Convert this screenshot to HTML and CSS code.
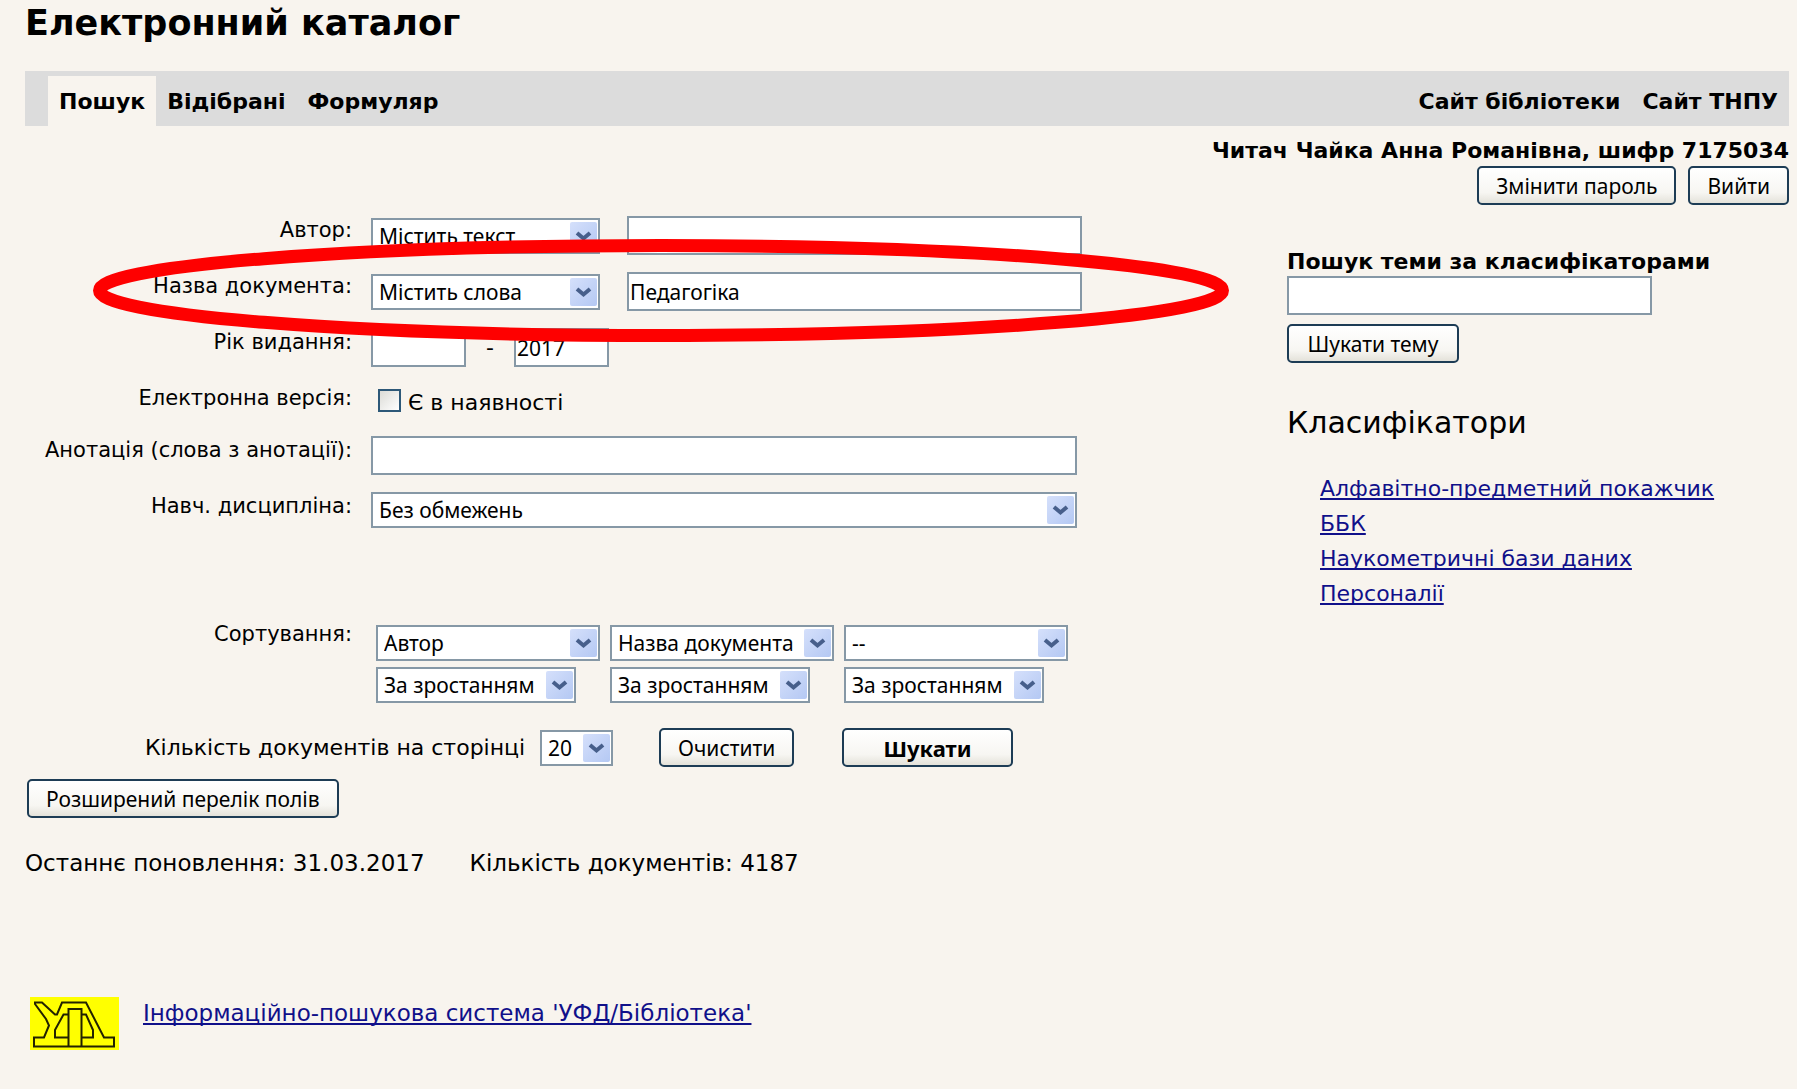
FILE: index.html
```html
<!DOCTYPE html>
<html lang="uk">
<head>
<meta charset="utf-8">
<title>Електронний каталог</title>
<link rel="stylesheet" href="styles.css">
</head>
<body>
<svg class="defs" aria-hidden="true">
  <defs>
    <linearGradient id="arrow-bg" x1="0" y1="0" x2="1" y2="1">
      <stop offset="0" stop-color="#d5e0fb"/>
      <stop offset="1" stop-color="#b4c8f3"/>
    </linearGradient>
    <symbol id="arrow" viewBox="0 0 27 28">
      <rect width="27" height="28" rx="2" fill="url(#arrow-bg)"/>
      <path d="M7 11l6.500 5.500L20 11" fill="none" stroke="#475f8b" stroke-width="4"/>
    </symbol>
  </defs>
</svg>

<header>
  <h1 class="title">Електронний каталог</h1>
  <nav class="bar">
    <a class="tab tab-active" href="#">Пошук</a>
    <a class="tab" href="#">Відібрані</a>
    <a class="tab" href="#">Формуляр</a>
    <a class="tab tab-push" href="#">Сайт бібліотеки</a>
    <a class="tab" href="#">Сайт ТНПУ</a>
  </nav>
  <div class="reader">
    <p class="reader-name">Читач Чайка Анна Романівна, шифр 7175034</p>
    <div class="reader-actions">
      <button class="btn" type="button">Змінити пароль</button>
      <button class="btn" type="button">Вийти</button>
    </div>
  </div>
</header>

<main class="main">
  <form class="search">
    <div class="row">
      <label class="label" for="author">Автор:</label>
      <div class="controls controls-wide">
        <span class="select w-mode"><select aria-label="Умова для автора"><option>Містить текст</option></select><svg class="arrow"><use href="#arrow"/></svg></span>
        <input class="input w-text" id="author" type="text">
      </div>
    </div>
    <div class="row">
      <label class="label" for="doc">Назва документа:</label>
      <div class="controls controls-wide">
        <span class="select w-mode"><select aria-label="Умова для назви"><option>Містить слова</option></select><svg class="arrow"><use href="#arrow"/></svg></span>
        <input class="input w-text" id="doc" type="text" value="Педагогіка">
      </div>
    </div>
    <div class="row">
      <label class="label" for="year-from">Рік видання:</label>
      <div class="controls">
        <input class="input w-year" id="year-from" type="text">
        <span class="dash">-</span>
        <input class="input w-year" aria-label="Рік видання до" type="text" value="2017">
      </div>
    </div>
    <div class="row row-check">
      <span class="label">Електронна версія:</span>
      <div class="controls check">
        <input class="checkbox" id="available" type="checkbox">
        <label class="check-label" for="available">Є в наявності</label>
      </div>
    </div>
    <div class="row">
      <label class="label" for="note">Анотація (слова з анотації):</label>
      <div class="controls"><input class="input w-full" id="note" type="text"></div>
    </div>
    <div class="row">
      <label class="label" for="subject">Навч. дисципліна:</label>
      <div class="controls">
        <span class="select w-full"><select id="subject"><option>Без обмежень</option></select><svg class="arrow"><use href="#arrow"/></svg></span>
      </div>
    </div>
    <div class="row row-sort">
      <label class="label" for="sort">Сортування:</label>
      <div class="sort">
        <span class="select w-key"><select id="sort"><option>Автор</option></select><svg class="arrow"><use href="#arrow"/></svg></span>
        <span class="select w-key"><select aria-label="Друге поле"><option>Назва документа</option></select><svg class="arrow"><use href="#arrow"/></svg></span>
        <span class="select w-key"><select aria-label="Третє поле"><option>--</option></select><svg class="arrow"><use href="#arrow"/></svg></span>
        <span class="select w-order"><select aria-label="Порядок 1"><option>За зростанням</option></select><svg class="arrow"><use href="#arrow"/></svg></span>
        <span class="select w-order"><select aria-label="Порядок 2"><option>За зростанням</option></select><svg class="arrow"><use href="#arrow"/></svg></span>
        <span class="select w-order"><select aria-label="Порядок 3"><option>За зростанням</option></select><svg class="arrow"><use href="#arrow"/></svg></span>
      </div>
    </div>
    <div class="submit">
      <label class="per-page" for="per-page">Кількість документів на сторінці</label>
      <span class="select w-count"><select id="per-page"><option>20</option></select><svg class="arrow"><use href="#arrow"/></svg></span>
      <button class="btn btn-clear" type="reset">Очистити</button>
      <button class="btn btn-search" type="submit">Шукати</button>
    </div>
    <button class="btn btn-more" type="button">Розширений перелік полів</button>
    <svg class="highlight" viewBox="0 0 1136 103" aria-hidden="true">
      <ellipse cx="568" cy="51.500" rx="561.500" ry="45" fill="none" stroke="#fe0000" stroke-width="13"/>
    </svg>
  </form>

  <aside class="side">
    <label class="side-label" for="topic">Пошук теми за класифікаторами</label>
    <input class="input w-topic" id="topic" type="text">
    <button class="btn btn-topic" type="button">Шукати тему</button>
    <h2 class="side-title">Класифікатори</h2>
    <ul class="links">
      <li><a href="#">Алфавітно-предметний покажчик</a></li>
      <li><a href="#">ББК</a></li>
      <li><a href="#">Наукометричні бази даних</a></li>
      <li><a href="#">Персоналії</a></li>
    </ul>
  </aside>
</main>

<p class="stats"><span>Останнє поновлення: 31.03.2017</span><span>Кількість документів: 4187</span></p>

<footer class="footer">
  <svg class="logo" viewBox="0 0 89 53" role="img" aria-label="УФД">
    <rect width="89" height="53" fill="#ff0"/>
    <path d="M5 5.500h7L25 17.500h2L32 5.500h24L74 40.500h10v9H4v-9h10L19 28.500 16 22 5 7zM38.500 49V12h13v37M38.500 17.500h-5L25 33v7.500h13.500M51.500 17.500H56L63 33v7.500H51.500" fill="none" stroke="#222200" stroke-width="2"/>
  </svg>
  <a href="#">Інформаційно-пошукова система 'УФД/Бібліотека'</a>
</footer>
</body>
</html>
```
FILE: styles.css
```css
* {
  box-sizing: border-box;
}

body {
  margin: 0;
  padding: 3px 8px 24px 25px;
  background: #f8f4ee;
  color: #000;
  font: 22px/28px "DejaVu Sans", Verdana, sans-serif;
}

p,
h1,
h2,
ul {
  margin: 0;
  padding: 0;
}

a {
  color: #10108a;
  text-decoration-thickness: 2px;
  text-underline-offset: 2px;
  text-decoration-skip-ink: none;
}

.defs {
  position: absolute;
  width: 0;
  height: 0;
}

/* Header */

.title {
  margin-bottom: 28px;
  font-size: 35px;
  line-height: 40px;
}

.bar {
  display: flex;
  padding: 5px 0 0 23px;
  background: #dcdcdc;
}

.tab {
  padding: 12px 11px 10px;
  color: #000;
  font-weight: bold;
  text-decoration: none;
}

.tab-active {
  background: #f8f4ee;
}

.tab-push {
  margin-left: auto;
}

.reader {
  padding-top: 10px;
  text-align: right;
}

.reader-name {
  font-weight: bold;
  line-height: 30px;
}

.reader-actions {
  display: flex;
  justify-content: flex-end;
  gap: 12px;
}

/* Controls */

.btn,
.input,
.select select {
  color: #000;
  font: 21px "Noto Sans", Tahoma, sans-serif;
}

.btn {
  height: 39px;
  padding: 0 17px;
  border: 2px solid #1d3c55;
  border-radius: 5px;
  background: linear-gradient(#fff, #f7f6f2 70%, #e4e2da);
  white-space: nowrap;
}

.input {
  height: 39px;
  padding: 0 1px;
  border: 2px solid #8698a6;
  background: #fff;
}

.select {
  display: grid;
  position: relative;
  height: 36px;
}

.select select {
  width: 100%;
  height: 100%;
  padding: 0 30px 0 6px;
  border: 2px solid #8698a6;
  border-radius: 0;
  background: #fff;
  appearance: none;
}

.arrow {
  position: absolute;
  top: 4px;
  right: 3px;
  width: 27px;
  height: 28px;
  pointer-events: none;
}

.w-mode { width: 229px; }
.w-text { width: 455px; }
.w-year { width: 95px; }
.w-full { width: 706px; }
.w-key { width: 224px; }
.w-order { width: 200px; }
.w-count { width: 73px; }
.w-topic { width: 365px; }

/* Search form */

.main {
  display: grid;
  grid-template-columns: 1262fr 502fr;
  padding-top: 11px;
}

.search {
  position: relative;
}

.row {
  display: grid;
  grid-template-columns: 327px 1fr;
  column-gap: 19px;
  min-height: 39px;
  margin-bottom: 17px;
}

.row-check {
  min-height: 35px;
}

.label {
  font-size: 21px;
  text-align: right;
  white-space: nowrap;
}

.controls {
  display: flex;
  align-items: flex-start;
}

.controls-wide {
  align-items: center;
  gap: 27px;
}

.dash {
  width: 48px;
  padding-top: 6px;
  text-align: center;
}

.check {
  gap: 7px;
  padding: 5px 0 0 7px;
}

.checkbox {
  width: 23px;
  height: 23px;
  margin: 0;
  border: 2px solid #2d5878;
  background: linear-gradient(135deg, #dcdcd7, #fff);
  appearance: none;
}

.row-sort {
  margin: 89px 0 25px;
}

.sort {
  display: grid;
  grid-template-columns: repeat(3, 224px);
  gap: 6px 10px;
  padding: 5px 0 0 5px;
}

.submit {
  display: flex;
  align-items: center;
  padding-left: 120px;
}

.per-page {
  width: 395px;
  white-space: nowrap;
}

.btn-clear {
  width: 135px;
  margin: 0 48px 0 46px;
}

.btn-search {
  width: 171px;
  font-size: 22px;
  font-weight: bold;
}

.btn-more {
  margin: 12px 0 0 2px;
}

.highlight {
  position: absolute;
  top: 23px;
  left: 68px;
  width: 1136px;
  height: 103px;
  pointer-events: none;
}

/* Classifiers */

.side {
  display: flex;
  flex-direction: column;
  align-items: flex-start;
  padding-top: 32px;
}

.side-label {
  font-weight: bold;
  white-space: nowrap;
}

.btn-topic {
  width: 172px;
  margin-top: 9px;
}

.side-title {
  margin: 42px 0 30px;
  font-size: 30px;
  font-weight: normal;
  line-height: 36px;
}

.links {
  padding-left: 33px;
  line-height: 35px;
  list-style: none;
}

/* Footer */

.stats {
  display: flex;
  gap: 45px;
  margin: 31px 0 120px;
}

.footer {
  display: flex;
  gap: 24px;
  padding-left: 5px;
  line-height: 32px;
}

.stats,
.footer {
  font-size: 23px;
}

.logo {
  width: 89px;
  height: 53px;
}
```
